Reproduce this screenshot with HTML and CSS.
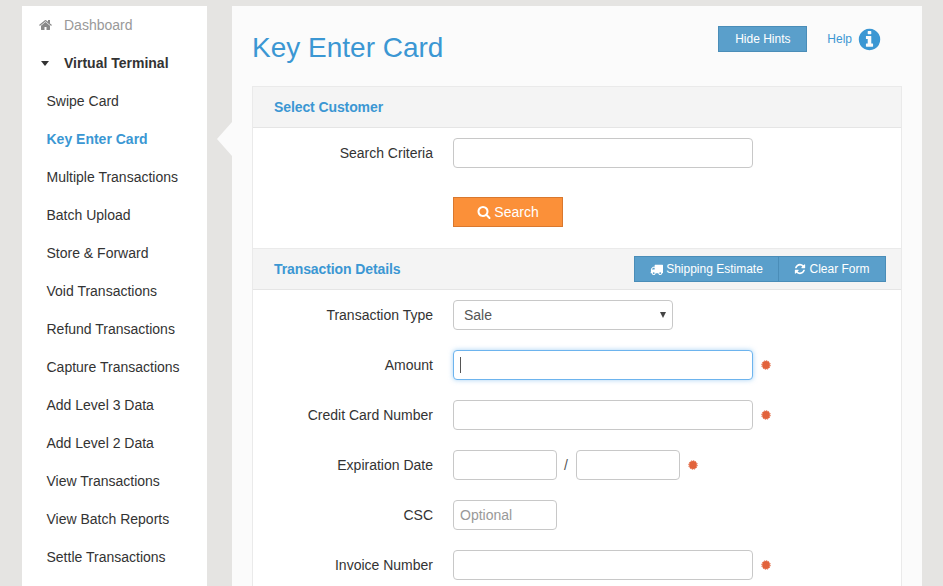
FILE: index.html
```html
<!DOCTYPE html>
<html lang="en">
<head>
  <meta charset="UTF-8" />
  <meta name="viewport" content="width=device-width, initial-scale=1.0"/>
  <title>Key Enter Card</title>
  <link rel="stylesheet" href="styles.css">
</head>
<body>

<svg class="defs" aria-hidden="true">
  <symbol id="i-home" viewBox="0 0 1792 1792"><path d="M1408 992v480q0 26-19 45t-45 19h-384v-384h-256v384h-384q-26 0-45-19t-19-45v-480q0-1 .5-3t.5-3l575-474 575 474q1 2 1 6zm223-69l-62 74q-8 9-21 11h-3q-13 0-21-7l-692-577-692 577q-12 8-24 7-13-2-21-11l-62-74q-8-10-7-23.5t11-21.5l719-599q32-26 76-26t76 26l244 204v-195q0-14 9-23t23-9h192q14 0 23 9t9 23v408l219 182q10 8 11 21.5t-7 23.500z"/></symbol>
  <symbol id="i-search" viewBox="0 0 1792 1792"><path d="M1216 832q0-185-131.500-316.500t-316.500-131.500-316.500 131.500-131.500 316.500 131.500 316.500 316.500 131.500 316.500-131.500 131.500-316.500zm512 832q0 52-38 90t-90 38q-54 0-90-38l-343-342q-179 124-399 124-143 0-273.500-55.500t-225-150-150-225-55.500-273.500 55.500-273.500 150-225 225-150 273.500-55.500 273.500 55.500 225 150 150 225 55.500 273.500q0 220-124 399l343 343q37 37 37 90z"/></symbol>
  <symbol id="i-truck" viewBox="0 0 1792 1792"><path d="M640 1408q0-52-38-90t-90-38-90 38-38 90 38 90 90 38 90-38 38-90zm-384-512h384v-256h-158q-13 0-22 9l-195 195q-9 9-9 22v30zm1280 512q0-52-38-90t-90-38-90 38-38 90 38 90 90 38 90-38 38-90zm256-1088v1024q0 15-4 26.500t-13.500 18.500-16.500 11.500-23.500 6-22.500 2-25.500 0-22.500-.5q0 106-75 181t-181 75-181-75-75-181h-384q0 106-75 181t-181 75-181-75-75-181h-64q-3 0-22.500.5t-25.500 0-22.500-2-23.500-6-16.500-11.500-13.500-18.500-4-26.500q0-26 19-45t45-19v-320q0-8-.5-35t0-38 2.500-34.500 6.500-37 14-30.500 22.500-30l198-198q19-19 50.500-32t58.500-13h160v-192q0-26 19-45t45-19h1024q26 0 45 19t19 45z"/></symbol>
  <symbol id="i-refresh" viewBox="0 0 1792 1792"><path d="M1639 1056q0 5-1 7-64 268-268 434.500t-478 166.500q-146 0-282.500-55t-243.500-157l-129 129q-19 19-45 19t-45-19-19-45v-448q0-26 19-45t45-19h448q26 0 45 19t19 45-19 45l-137 137q71 66 161 102t187 36q134 0 250-65t186-179q11-17 53-117 8-23 30-23h192q13 0 22.500 9.500t9.500 22.500zm25-800v448q0 26-19 45t-45 19h-448q-26 0-45-19t-19-45 19-45l138-138q-148-137-349-137-134 0-250 65t-186 179q-11 17-53 117-8 23-30 23h-199q-13 0-22.500-9.500t-9.500-22.500v-7q65-268 270-434.500t480-166.500q146 0 284 55.500t245 156.500l130-129q19-19 45-19t45 19 19 45z"/></symbol>
  <symbol id="i-info" viewBox="0 0 1792 1792"><path d="M1152 1376v-160q0-14-9-23t-23-9h-96v-512q0-14-9-23t-23-9h-320q-14 0-23 9t-9 23v160q0 14 9 23t23 9h96v320h-96q-14 0-23 9t-9 23v160q0 14 9 23t23 9h448q14 0 23-9t9-23zm-128-896v-160q0-14-9-23t-23-9h-192q-14 0-23 9t-9 23v160q0 14 9 23t23 9h192q14 0 23-9t9-23zm640 416q0 209-103 385.500t-279.500 279.500-385.500 103-385.500-103-279.500-279.500-103-385.500 103-385.500 279.500-279.500 385.500-103 385.500 103 279.500 279.500 103 385.500z"/></symbol>
  <symbol id="i-req" viewBox="0 0 10 10"><circle cx="5" cy="5" r="3.900"/><circle cx="5" cy="5" r="4.300" fill="none" stroke="currentColor" stroke-width=".9" stroke-dasharray="1.300 .9"/></symbol>
</svg>

<nav class="sidebar">
  <ul class="menu">
    <li class="menu-top muted"><svg class="menu-icon home"><use href="#i-home"/></svg>Dashboard</li>
    <li class="menu-top open"><span class="menu-icon"><span class="caret"></span></span>Virtual Terminal</li>
    <li>Swipe Card</li>
    <li class="active">Key Enter Card</li>
    <li>Multiple Transactions</li>
    <li>Batch Upload</li>
    <li>Store &amp; Forward</li>
    <li>Void Transactions</li>
    <li>Refund Transactions</li>
    <li>Capture Transactions</li>
    <li>Add Level 3 Data</li>
    <li>Add Level 2 Data</li>
    <li>View Transactions</li>
    <li>View Batch Reports</li>
    <li>Settle Transactions</li>
  </ul>
</nav>

<main class="content">
  <span class="pointer"></span>

  <header class="page-head">
    <h1>Key Enter Card</h1>
    <div class="page-tools">
      <button type="button" class="btn btn-blue hints">Hide Hints</button>
      <a class="help">Help</a>
      <svg class="help-icon"><use href="#i-info"/></svg>
    </div>
  </header>

  <form class="panel">
    <div class="panel-head"><h2>Select Customer</h2></div>
    <div class="panel-body customer">
      <div class="row">
        <label>Search Criteria</label>
        <input type="text" class="field">
      </div>
      <div class="row search-row">
        <button type="button" class="btn btn-orange"><svg class="btn-icon"><use href="#i-search"/></svg>Search</button>
      </div>
    </div>

    <div class="panel-head details-head">
      <h2>Transaction Details</h2>
      <div class="btn-group">
        <button type="button" class="btn btn-blue"><svg class="btn-icon truck"><use href="#i-truck"/></svg>Shipping Estimate</button>
        <button type="button" class="btn btn-blue"><svg class="btn-icon small"><use href="#i-refresh"/></svg>Clear Form</button>
      </div>
    </div>
    <div class="panel-body">
      <div class="row">
        <label>Transaction Type</label>
        <div class="select-wrap">
          <select class="field field-select"><option>Sale</option></select>
        </div>
      </div>
      <div class="row">
        <label>Amount</label>
        <div class="focus-wrap">
          <input type="text" class="field" autofocus>
          <span class="text-caret"></span>
        </div>
        <svg class="req"><use href="#i-req"/></svg>
      </div>
      <div class="row">
        <label>Credit Card Number</label>
        <input type="text" class="field">
        <svg class="req"><use href="#i-req"/></svg>
      </div>
      <div class="row">
        <label>Expiration Date</label>
        <input type="text" class="field field-date">
        <span class="slash">/</span>
        <input type="text" class="field field-date">
        <svg class="req"><use href="#i-req"/></svg>
      </div>
      <div class="row">
        <label>CSC</label>
        <input type="text" class="field field-csc" placeholder="Optional">
      </div>
      <div class="row">
        <label>Invoice Number</label>
        <input type="text" class="field">
        <svg class="req"><use href="#i-req"/></svg>
      </div>
    </div>
  </form>
</main>

</body>
</html>
```

FILE: styles.css
```css
html, body {
  height: 100%;
}

body {
  margin: 0;
  height: 586px;
  overflow: hidden;
  box-sizing: border-box;
  padding: 6px 21px 0 22px;
  display: flex;
  gap: 25px;
  background: #e5e4e2;
  font-family: "Liberation Sans", Arial, sans-serif;
  font-size: 14px;
  color: #333;
}

.defs {
  display: none;
}

/* sidebar */
.sidebar {
  width: 185px;
  flex: none;
  background: white;
}

.menu {
  list-style: none;
  margin: 0;
  padding: 0;
}

.menu li {
  height: 38px;
  line-height: 38px;
  padding-left: 24.5px;
  white-space: nowrap;
}

.menu .menu-top {
  display: flex;
  align-items: center;
  padding-left: 17px;
}

.menu .muted {
  color: #999;
}

.menu .open {
  font-weight: bold;
}

.menu .active {
  color: #3b97d3;
  font-weight: bold;
}

.menu-icon {
  width: 25px;
  flex: none;
  display: block;
}

.menu-icon.home {
  width: 14px;
  height: 14px;
  margin-right: 11px;
  fill: #888;
}

.caret {
  display: block;
  width: 0;
  height: 0;
  margin-left: 2px;
  border-left: 4.5px solid transparent;
  border-right: 4.5px solid transparent;
  border-top: 5px solid #333;
}

/* main area */
.content {
  position: relative;
  width: 690px;
  flex: none;
  box-sizing: border-box;
  padding: 0 20px;
  background: #fbfbfb;
}

.pointer {
  position: absolute;
  left: -15px;
  top: 116px;
  width: 0;
  height: 0;
  border-top: 17px solid transparent;
  border-bottom: 17px solid transparent;
  border-right: 15px solid #fbfbfb;
}

.page-head {
  height: 80px;
  display: flex;
  justify-content: space-between;
  align-items: flex-start;
}

.page-head h1 {
  margin: 25px 0 0;
  font-size: 28px;
  line-height: 34px;
  font-weight: normal;
  color: #3b97d3;
}

.page-tools {
  display: flex;
  align-items: center;
  margin: 20px 20px 0 0;
}

.help {
  margin-left: 20px;
  font-size: 12px;
  color: #3b97d3;
}

.help-icon {
  width: 25px;
  height: 25px;
  margin-left: 5px;
  fill: #3b97d3;
}

/* buttons */
.btn {
  box-sizing: border-box;
  font-family: inherit;
  color: white;
  border: 1px solid;
  border-radius: 0;
  padding: 0;
  cursor: pointer;
  display: inline-flex;
  align-items: center;
  justify-content: center;
}

.btn-blue {
  height: 26px;
  font-size: 12px;
  background: #5a9fcb;
  border-color: #4a8db8;
}

.hints {
  width: 89px;
}

.btn-orange {
  width: 110px;
  height: 30px;
  font-size: 14px;
  background: #fb9039;
  border-color: #d9782e;
}

.btn-icon {
  width: 14px;
  height: 14px;
  margin-right: 3px;
  fill: white;
}

.btn-icon.small {
  width: 12px;
  height: 12px;
}

.btn-icon.truck {
  width: 13px;
  height: 13px;
  margin-right: 3px;
}

.btn-group {
  display: flex;
}

.btn-group .btn:first-child {
  width: 145px;
}

.btn-group .btn:last-child {
  width: 108px;
  margin-left: -1px;
}

/* panel */
.panel {
  background: white;
  border-left: 1px solid #eaeaea;
  border-right: 1px solid #eaeaea;
}

.panel-head {
  box-sizing: border-box;
  height: 42px;
  display: flex;
  align-items: center;
  justify-content: space-between;
  padding: 0 15px 0 21px;
  background: #f4f4f4;
  border-top: 1px solid #eaeaea;
  border-bottom: 1px solid #e5e5e5;
}

.panel-head h2 {
  margin: 0;
  font-size: 14px;
  font-weight: bold;
  letter-spacing: -0.1px;
  color: #3b97d3;
}

.panel-body {
  padding: 10px 0 6px;
}

.customer {
  height: 120px;
  box-sizing: border-box;
}

.row {
  display: flex;
  align-items: center;
  margin-bottom: 20px;
}

.row:last-child {
  margin-bottom: 0;
}

.row label {
  width: 180px;
  flex: none;
  margin-right: 20px;
  text-align: right;
}

.search-row {
  margin-top: 29px;
  padding-left: 200px;
}

/* inputs */
.field {
  display: block;
  box-sizing: border-box;
  width: 300px;
  height: 30px;
  padding: 0 6px;
  background: white;
  border: 1px solid #c8c8c8;
  border-radius: 4px;
  font-family: inherit;
  font-size: 14px;
  color: #555;
  outline: none;
}

.field:focus {
  border-color: #6db4ee;
  box-shadow: 0 0 5px rgba(109, 180, 238, 0.6);
  caret-color: transparent;
}

.field::placeholder {
  color: #999;
}

.select-wrap, .focus-wrap {
  position: relative;
}

.select-wrap::after {
  content: "";
  position: absolute;
  right: 7px;
  top: 12px;
  width: 0;
  height: 0;
  border-left: 3px solid transparent;
  border-right: 3px solid transparent;
  border-top: 6px solid #444;
  pointer-events: none;
}

.text-caret {
  position: absolute;
  left: 7px;
  top: 7px;
  width: 1px;
  height: 16px;
  background: #555;
}

.field-select {
  width: 220px;
  padding-left: 10px;
  appearance: none;
  -webkit-appearance: none;
}

.field-date {
  width: 104px;
}

.field-csc {
  width: 104px;
}

.slash {
  width: 18px;
  padding-right: 1px;
  text-align: center;
  color: #555;
}

.req {
  width: 10px;
  height: 10px;
  margin-left: 8px;
  color: #e2633c;
  fill: #e2633c;
}
```
